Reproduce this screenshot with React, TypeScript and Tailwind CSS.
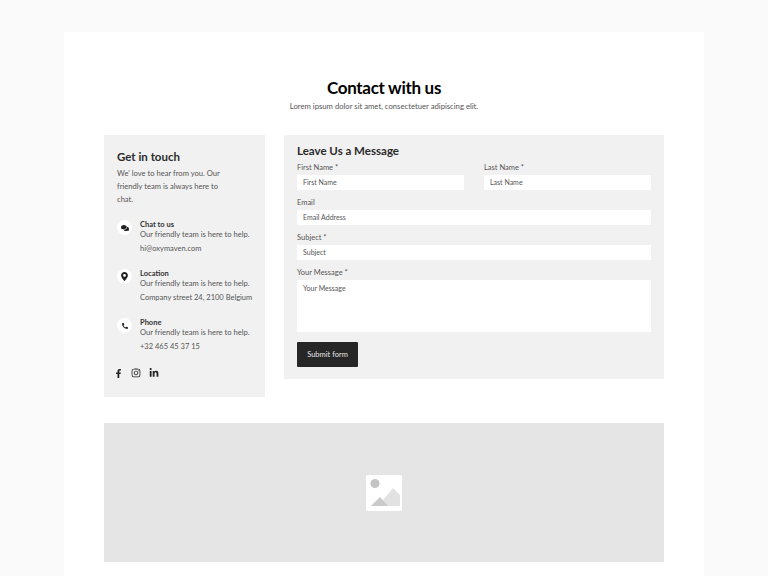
import type { ReactNode } from 'react';
import { FaComments, FaFacebookF, FaInstagram, FaLinkedinIn, FaMapMarkerAlt, FaPhoneAlt } from 'react-icons/fa';

const body = "font-['Lato','Liberation_Sans',sans-serif]";

function ContactRow({
  icon,
  title,
  value,
  className,
}: {
  icon: ReactNode;
  title: string;
  value: string;
  className: string;
}) {
  return (
    <div className={`flex ${className}`}>
      <div className="mt-[1px] flex h-[15px] w-[15px] shrink-0 items-center justify-center rounded-full bg-white text-[#222]">
        {icon}
      </div>
      <div className="ml-[8px] whitespace-nowrap">
        <div className="pt-[1px] text-[7.5px] leading-[9px] font-bold text-[#333]">{title}</div>
        <div className="text-[7.6px] leading-[10px] text-[#555]">Our friendly team is here to help.</div>
        <div className="mt-[5px] text-[7.5px] leading-[10px] text-[#555]">{value}</div>
      </div>
    </div>
  );
}

function Field({ label, placeholder, className = '' }: { label: string; placeholder: string; className?: string }) {
  return (
    <div className={className}>
      <div className="text-[7.5px] leading-[10px] text-[#555]">{label}</div>
      <div className="mt-[2px] flex h-[15px] items-center bg-white px-[6px] text-[7px] text-[#555]">{placeholder}</div>
    </div>
  );
}

export default function App() {
  return (
    <div className={`h-[576px] overflow-hidden bg-[#fafafa] pt-8 ${body}`}>
      <main className="mx-auto h-[544px] w-[640px] bg-white px-10 pt-[46px]">
        <h1 className="text-center text-[17px] leading-[20px] font-bold tracking-[-0.3px] text-black">Contact with us</h1>
        <p className="mt-[3px] text-center text-[7.7px] leading-[11px] text-[#555]">
          Lorem ipsum dolor sit amet, consectetuer adipiscing elit.
        </p>

        <div className="mt-[23px] flex items-start gap-[19px]">
          <aside className="h-[262px] w-[161px] shrink-0 bg-[#f1f1f1] px-[13px] pt-[15px]">
            <h2 className="text-[11.5px] leading-[14px] font-bold text-[#2b2b2b]">Get in touch</h2>
            <p className="mt-[3px] w-[105px] text-[7.6px] leading-[13px] text-[#555]">
              We' love to hear from you. Our friendly team is always here to chat.
            </p>
            <ContactRow
              className="mt-[13px]"
              icon={<FaComments size={8} />}
              title="Chat to us"
              value="hi@oxymaven.com"
            />
            <ContactRow
              className="mt-[14px]"
              icon={<FaMapMarkerAlt size={9} />}
              title="Location"
              value="Company street 24, 2100 Belgium"
            />
            <ContactRow
              className="mt-[14px]"
              icon={<FaPhoneAlt size={6} />}
              title="Phone"
              value="+32 465 45 37 15"
            />
            <div className="mt-[16px] -ml-[3px] flex items-center gap-[8px] text-[#222]">
              <FaFacebookF size={9} />
              <FaInstagram size={10} />
              <FaLinkedinIn size={10} />
            </div>
          </aside>

          <section className="h-[244px] flex-1 bg-[#f1f1f1] px-[13px] pt-[8px]">
            <h2 className="text-[11.5px] leading-[15px] font-bold text-[#2b2b2b]">Leave Us a Message</h2>
            <div className="mt-[5px] flex gap-5">
              <Field className="flex-1" label="First Name *" placeholder="First Name" />
              <Field className="flex-1" label="Last Name *" placeholder="Last Name" />
            </div>
            <Field className="mt-[8px]" label="Email" placeholder="Email Address" />
            <Field className="mt-[8px]" label="Subject *" placeholder="Subject" />
            <div className="mt-[8px]">
              <div className="text-[7.5px] leading-[10px] text-[#555]">Your Message *</div>
              <div className="mt-[2px] h-[52px] bg-white px-[6px] pt-[3px] text-[7px] leading-[10px] text-[#555]">Your Message</div>
            </div>
            <button className="mt-[10px] block h-[25px] w-[61px] rounded-[1px] bg-[#262626] text-[7.5px] text-[#e5e5e5]">
              Submit form
            </button>
          </section>
        </div>

        <div className="mt-[26px] flex h-[139px] items-center justify-center bg-[#e5e5e5]">
          <svg width="36" height="36" viewBox="0 0 36 36" aria-hidden="true">
            <rect width="36" height="36" rx="2" fill="#fff" />
            <circle cx="9" cy="8.5" r="4.5" fill="#c4c4c4" />
            <path d="M12 31 L27 13 L34 20 V31 Z" fill="#e2e2e2" />
            <path d="M5 31 L14 22 L22 31 Z" fill="#cacaca" />
          </svg>
        </div>
      </main>
    </div>
  );
}
